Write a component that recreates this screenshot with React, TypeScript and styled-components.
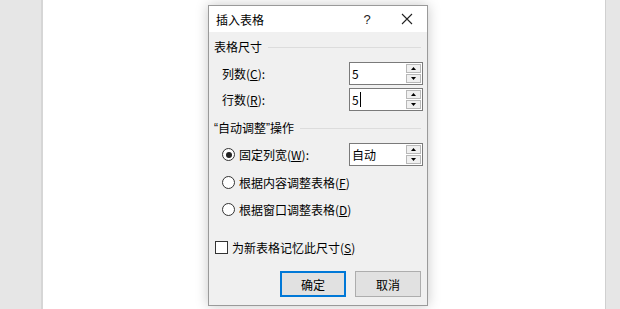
import styled, { createGlobalStyle } from "styled-components";
import { FC, ReactNode } from "react";

const GlobalStyle = createGlobalStyle`
  html, body {
    margin: 0;
    padding: 0;
  }
  body {
    font-family: "Noto Sans CJK SC", "Noto Sans", sans-serif;
    font-size: 12px;
    color: #000;
  }
`;

const App: FC = () => {
    return <>
        <GlobalStyle />
        <Workspace>
            <Margin side="left" />
            <Page />
            <Margin side="right" />
            <Dialog>
                <TitleBar>
                    <Title>插入表格</Title>
                    <TitleButton>?</TitleButton>
                    <TitleButton>
                        <svg width="12" height="12" viewBox="0 0 12 12">
                            <path d="M1 1 L11 11 M11 1 L1 11" stroke="#222" strokeWidth="1.1" />
                        </svg>
                    </TitleButton>
                </TitleBar>
                <Body>
                    <GroupHeader>表格尺寸</GroupHeader>
                    <FieldRow first>
                        <FieldLabel>列数(<u>C</u>):</FieldLabel>
                        <SpinBox value="5" />
                    </FieldRow>
                    <FieldRow>
                        <FieldLabel>行数(<u>R</u>):</FieldLabel>
                        <SpinBox value="5" caret />
                    </FieldRow>
                    <GroupHeader second><Quote>“</Quote>自动调整<Quote>”</Quote>操作</GroupHeader>
                    <FieldRow first>
                        <Radio checked>固定列宽(<u>W</u>):</Radio>
                        <SpinBox value="自动" />
                    </FieldRow>
                    <OptionRow first>
                        <Radio>根据内容调整表格(<u>F</u>)</Radio>
                    </OptionRow>
                    <OptionRow>
                        <Radio>根据窗口调整表格(<u>D</u>)</Radio>
                    </OptionRow>
                    <CheckRow>
                        <CheckBox />
                        为新表格记忆此尺寸(<u>S</u>)
                    </CheckRow>
                    <Buttons>
                        <Button primary>确定</Button>
                        <Button>取消</Button>
                    </Buttons>
                </Body>
            </Dialog>
        </Workspace>
    </>
}

const SpinBox: FC<{ value: string; caret?: boolean }> = ({ value, caret }) => (
    <SpinFrame>
        <SpinText>
            {value}
            {caret && <Caret />}
        </SpinText>
        <SpinButtons>
            <SpinButton>
                <svg width="5" height="3" viewBox="0 0 5 3"><path d="M0 3 L2.5 0 L5 3 Z" fill="#000" /></svg>
            </SpinButton>
            <SpinButton>
                <svg width="5" height="3" viewBox="0 0 5 3"><path d="M0 0 L2.5 3 L5 0 Z" fill="#000" /></svg>
            </SpinButton>
        </SpinButtons>
    </SpinFrame>
);

const Radio: FC<{ checked?: boolean; children: ReactNode }> = ({ checked, children }) => (
    <RadioLabel>
        <RadioCircle>{checked && <RadioDot />}</RadioCircle>
        {children}
    </RadioLabel>
);

const Workspace = styled.div`
    position: relative;
    display: flex;
    height: 309px;
    overflow: hidden;
`;

const Margin = styled.div<{ side: "left" | "right" }>`
    width: ${p => p.side === "left" ? "41px" : "14px"};
    background: #e6e6e6;
    ${p => p.side === "left" ? "border-right: 2px solid #d6d6d6;" : "border-left: 1px solid #d0d0d0;"}
`;

const Page = styled.div`
    flex: 1;
    background: #fff;
`;

const Dialog = styled.div`
    position: absolute;
    left: 208px;
    top: 5px;
    width: 218px;
    height: 299px;
    border: 1px solid #9a9a9a;
    background: #f0f0f0;
    box-shadow: 0 0 12px rgba(0, 0, 0, 0.22);
    display: flex;
    flex-direction: column;
`;

const TitleBar = styled.div`
    height: 26px;
    background: #fff;
    display: flex;
    align-items: center;
    padding-left: 7px;
`;

const Title = styled.div`
    flex: 1;
    font-size: 12px;
`;

const TitleButton = styled.div`
    width: 40px;
    height: 26px;
    display: flex;
    align-items: center;
    justify-content: center;
    font-family: "Liberation Sans", sans-serif;
    font-size: 13px;
    color: #222;
`;

const Body = styled.div`
    flex: 1;
    display: flex;
    flex-direction: column;
    padding: 8px 4px 0 5px;
`;

const GroupHeader = styled.div<{ second?: boolean }>`
    display: flex;
    align-items: center;
    height: 14px;
    line-height: 14px;
    margin-top: ${p => p.second ? "10px" : "0"};
    white-space: nowrap;

    &::after {
        content: "";
        flex: 1;
        height: 1px;
        background: #dcdcdc;
        margin: 0 2px 0 6px;
    }
`;

const Quote = styled.span`
    font-family: "Liberation Sans", sans-serif;
    font-size: 12px;
`;

const FieldRow = styled.div<{ first?: boolean }>`
    display: flex;
    align-items: center;
    justify-content: space-between;
    height: 23px;
    margin-top: ${p => p.first ? "8px" : "3px"};
    padding-left: 8px;
`;

const FieldLabel = styled.span`
    white-space: nowrap;
`;

const SpinFrame = styled.div`
    display: flex;
    width: 74px;
    height: 23px;
    box-sizing: border-box;
    border: 1px solid #7a7a7a;
    background: #fff;
`;

const SpinText = styled.div`
    flex: 1;
    display: flex;
    align-items: center;
    padding-left: 2px;
    font-size: 12px;
`;

const Caret = styled.span`
    display: inline-block;
    width: 1px;
    height: 15px;
    background: #000;
    margin-left: 1px;
`;

const SpinButtons = styled.div`
    width: 15px;
    display: flex;
    flex-direction: column;
    gap: 1px;
    padding: 1px;
`;

const SpinButton = styled.div`
    flex: 1;
    display: flex;
    align-items: center;
    justify-content: center;
    background: #f0f0f0;
    border: 1px solid #b8b8b8;
`;

const RadioLabel = styled.span`
    display: flex;
    align-items: center;
    white-space: nowrap;
`;

const RadioCircle = styled.span`
    width: 11px;
    height: 11px;
    border: 1px solid #333;
    border-radius: 50%;
    background: #fff;
    display: flex;
    align-items: center;
    justify-content: center;
    margin-right: 4px;
`;

const RadioDot = styled.span`
    width: 6px;
    height: 6px;
    border-radius: 50%;
    background: #222;
`;

const OptionRow = styled.div<{ first?: boolean }>`
    display: flex;
    align-items: center;
    height: 16px;
    margin-top: ${p => p.first ? "8px" : "11px"};
    padding-left: 8px;
`;

const CheckRow = styled.div`
    display: flex;
    align-items: center;
    height: 16px;
    margin-top: 22px;
    white-space: nowrap;
`;

const CheckBox = styled.span`
    width: 11px;
    height: 11px;
    border: 1px solid #333;
    background: #fff;
    margin: 0 4px 0 1px;
`;

const Buttons = styled.div`
    display: flex;
    justify-content: flex-end;
    gap: 9px;
    margin-top: 16px;
    padding-right: 2px;
`;

const Button = styled.div<{ primary?: boolean }>`
    width: 66px;
    height: 26px;
    box-sizing: border-box;
    display: flex;
    align-items: center;
    justify-content: center;
    background: #e1e1e1;
    border: ${p => p.primary ? "2px solid #0078d7" : "1px solid #adadad"};
`;

export default App;
